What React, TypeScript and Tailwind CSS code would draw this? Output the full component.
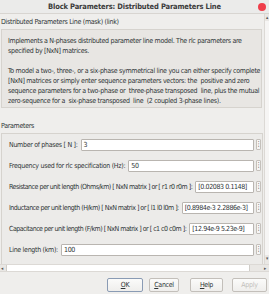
import React from "react";

const rows = [
  { label: "Number of phases [ N ]:", value: "3" },
  { label: "Frequency used for rlc specification (Hz):", value: "50" },
  { label: "Resistance per unit length (Ohms/km) [ NxN matrix ] or [ r1 r0 r0m ]:", value: "[0.02083 0.1148]", tight: true },
  { label: "Inductance per unit length (H/km) [ NxN matrix ] or [ l1 l0 l0m ]:", value: "[0.8984e-3  2.2886e-3]", tight: true },
  { label: "Capacitance per unit length (F/km) [ NxN matrix ] or [ c1 c0 c0m ]:", value: "[12.94e-9 5.23e-9]", tight: true },
  { label: "Line length (km):", value: "100" },
];

function ParamRow({ label, value, tight }: { label: string; value: string; tight?: boolean }) {
  return (
    <div className="flex h-[21px] items-center pl-[7px] pr-[1px]">
      <span className={`shrink-0 whitespace-nowrap ${tight ? "tracking-[-0.5px]" : ""}`}>{label}</span>
      <div
        className={`ml-[3px] flex h-[12px] min-w-0 flex-1 items-center overflow-hidden whitespace-nowrap rounded-[1px] border border-[#b9b5b0] bg-white pl-[2px] ${
          tight ? "tracking-[-0.4px]" : ""
        }`}
      >
        {value}
      </div>
      <div className="ml-[2px] flex h-[11px] w-[5px] shrink-0 items-center justify-center rounded-[1px] border border-[#c4c0bb] bg-[#f6f5f4] text-[7px] leading-none">
        ⋮
      </div>
    </div>
  );
}

function Button({ children, disabled, focused }: { children: React.ReactNode; disabled?: boolean; focused?: boolean }) {
  return (
    <div
      className={`flex h-[14px] items-center justify-center rounded-[2px] border bg-gradient-to-b from-[#fbfbfa] to-[#efeeec] ${
        focused ? "border-[#8a9bb4]" : "border-[#c3bfba]"
      } ${disabled ? "text-[#c2bfbb]" : "text-[#2e3436]"}`}
    >
      {children}
    </div>
  );
}

export default function App() {
  return (
    <div
      className="h-[294px] w-[269px] overflow-hidden bg-[#efeeec] text-[7px] leading-[10px] tracking-[-0.3px] text-[#2e3436]"
      style={{ fontFamily: '"DejaVu Sans Condensed", "Liberation Sans Narrow", sans-serif' }}
    >
      {/* title bar */}
      <div className="relative flex h-[14px] items-center justify-center border-b border-[#d8d5d1] bg-[#ebebea] text-[7.5px] font-bold tracking-[-0.15px] text-[#3b3b3b]">
        Block Parameters: Distributed Parameters Line
        <div className="absolute right-[3px] top-[3px] h-[8px] w-[8px] rounded-full bg-[#ef3e4a]" />
      </div>

      <div className="flex h-[250px]">
        {/* scroll content */}
        <div className="flex w-[264px] flex-col">
          <div className="flex h-[15px] items-center pl-[1px]">Distributed Parameters Line (mask) (link)</div>
          <div className="ml-[1px] mr-[2px] whitespace-nowrap border border-[#d6d3ce] bg-[#e8e6e3] pb-[1px] pl-[6px] pt-[6px]">
            <p>Implements a N-phases distributed parameter line model. The rlc parameters are</p>
            <p>specified by [NxN] matrices.</p>
            <p className="mt-[10px]">To model a two-, three-, or a six-phase symmetrical line you can either specify complete</p>
            <p>[NxN] matrices or simply enter sequence parameters vectors: the&nbsp; positive and zero</p>
            <p>sequence parameters for a two-phase or&nbsp; three-phase transposed&nbsp; line, plus the mutual</p>
            <p>zero-sequence for a&nbsp; six-phase transposed&nbsp; line&nbsp; (2 coupled 3-phase lines).</p>
          </div>
          <div className="mt-[13px] h-[10px] pl-[1px]">Parameters</div>
          <div className="ml-[1px] mr-[1px] mt-[2px] flex-1 border border-b-0 border-[#d6d3ce] bg-[#ecebe9]">
            {rows.map((r) => (
              <ParamRow key={r.label} label={r.label} value={r.value} tight={r.tight} />
            ))}
          </div>
        </div>
        {/* vertical scrollbar */}
        <div className="flex w-[5px] flex-col items-center border-l border-[#dcd9d5] bg-[#e9e7e4] text-[5px] leading-none text-[#555]">
          <span className="mt-[1px]">▴</span>
          <div className="my-[1px] w-[4px] flex-1 bg-[#f6f5f4]" />
          <span className="mb-[3px]">▾</span>
        </div>
      </div>

      {/* horizontal scrollbar */}
      <div className="flex h-[8px] items-center border-y border-[#dcd9d5] bg-[#e9e7e4] text-[5px] leading-none text-[#555]">
        <span className="w-[6px] pl-[1px]">◂</span>
        <div className="h-[6px] w-[244px] border-x border-[#d0cdc8] bg-white" />
        <div className="flex-1" />
        <span className="w-[8px] text-center">▸</span>
      </div>

      {/* buttons */}
      <div className="flex justify-end pr-[2px] pt-[6px]">
        <div className="w-[36px]"><Button focused><span className="underline">O</span>K</Button></div>
        <div className="ml-[6px] w-[30px]"><Button><span className="underline">C</span>ancel</Button></div>
        <div className="ml-[11px] w-[33px]"><Button><span className="underline">H</span>elp</Button></div>
        <div className="ml-[9px] w-[35px]"><Button disabled>Apply</Button></div>
      </div>
    </div>
  );
}
